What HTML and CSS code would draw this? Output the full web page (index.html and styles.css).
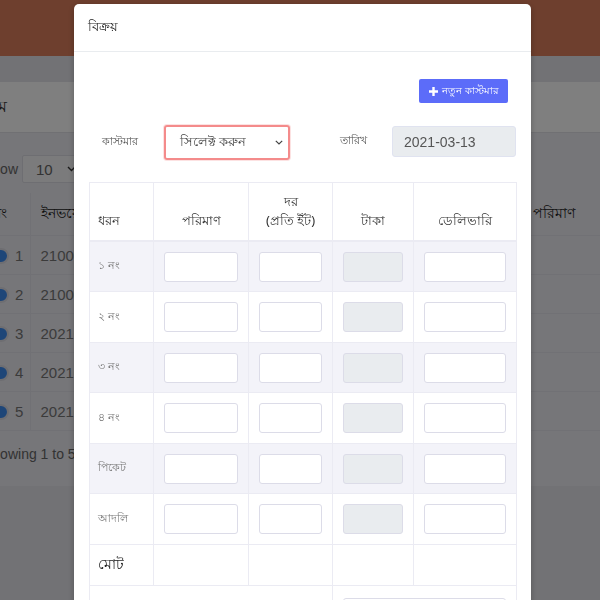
FILE: index.html
```html
<!DOCTYPE html>
<html lang="bn">
<head>
<meta charset="utf-8">
<title>বিক্রয়</title>
<link rel="stylesheet" href="styles.css">
</head>
<body>
<div class="page">
  <header class="topbar"></header>
  <main class="content">
    <section class="card">
      <div class="card-head"><span class="card-title">ম</span></div>
      <div class="card-body">
        <div class="dt-top">
          <span class="dt-label">Show</span>
          <span class="dt-select">10 <svg width="9" height="6" viewBox="0 0 9 6"><path d="M1 1l3.5 3.5L8 1" fill="none" stroke="#333" stroke-width="1.4"/></svg></span>
        </div>
        <table class="dt">
          <colgroup><col class="c1"><col class="c2"><col class="c3"><col class="c4"></colgroup>
          <thead>
            <tr><th>নং</th><th>ইনভয়েস নং</th><th></th><th>পরিমাণ</th></tr>
          </thead>
          <tbody>
            <tr><td><span class="radio"></span>1</td><td>21000</td><td></td><td></td></tr>
            <tr><td><span class="radio"></span>2</td><td>21000</td><td></td><td></td></tr>
            <tr><td><span class="radio"></span>3</td><td>20210</td><td></td><td></td></tr>
            <tr><td><span class="radio"></span>4</td><td>20210</td><td></td><td></td></tr>
            <tr><td><span class="radio"></span>5</td><td>20210</td><td></td><td></td></tr>
          </tbody>
        </table>
        <div class="dt-info">Showing 1 to 5 of 5 entries</div>
      </div>
    </section>
  </main>
</div>

<div class="backdrop"></div>

<div class="modal">
  <div class="modal-header"><h5 class="modal-title">বিক্রয়</h5></div>
  <div class="modal-body">
    <div class="btn-row">
      <button class="btn-primary"><svg class="plus" width="9" height="9" viewBox="0 0 9 9"><path d="M4.5 0v9M0 4.5h9" stroke="#fff" stroke-width="2.4"/></svg>নতুন কাস্টমার</button>
    </div>
    <div class="form-row">
      <label class="lbl lbl-customer">কাস্টমার</label>
      <div class="select">
        <span>সিলেক্ট করুন</span>
        <svg width="8" height="5" viewBox="0 0 8 5"><path d="M0.8 0.8L4 4l3.2-3.2" fill="none" stroke="#444" stroke-width="1.2"/></svg>
      </div>
      <label class="lbl lbl-date">তারিখ</label>
      <input class="date" type="text" value="2021-03-13" disabled>
    </div>
    <table class="sale">
      <colgroup><col class="s1"><col class="s2"><col class="s3"><col class="s4"><col class="s5"></colgroup>
      <thead>
        <tr><th class="left">ধরন</th><th>পরিমাণ</th><th>দর<br>(প্রতি ইঁট)</th><th>টাকা</th><th>ডেলিভারি</th></tr>
      </thead>
      <tbody>
        <tr class="odd"><td class="kind">১ নং</td><td><input></td><td><input></td><td><input disabled></td><td><input></td></tr>
        <tr><td class="kind">২ নং</td><td><input></td><td><input></td><td><input disabled></td><td><input></td></tr>
        <tr class="odd"><td class="kind">৩ নং</td><td><input></td><td><input></td><td><input disabled></td><td><input></td></tr>
        <tr><td class="kind">৪ নং</td><td><input></td><td><input></td><td><input disabled></td><td><input></td></tr>
        <tr class="odd"><td class="kind">পিকেট</td><td><input></td><td><input></td><td><input disabled></td><td><input></td></tr>
        <tr><td class="kind">আদলি</td><td><input></td><td><input></td><td><input disabled></td><td><input></td></tr>
        <tr class="total"><td>মোট</td><td></td><td></td><td></td><td></td></tr>
        <tr class="extra"><td colspan="3" class="right">পরিবহন খরচ</td><td colspan="2"><input></td></tr>
      </tbody>
    </table>
  </div>
</div>
</body>
</html>
```

FILE: styles.css
```css
html, body {
  margin: 0;
  padding: 0;
  overflow: hidden;
  height: 600px;
}
body {
  font-family: "Noto Sans", "Liberation Sans", sans-serif;
  color: #333;
  background: #e4e4ea;
}

/* background page */
.page { width: 600px; }
.topbar { height: 56px; background: #dc7e5c; }
.content { padding-top: 26px; }
.card {
  margin: 0 -40px;
  background: #ececf2;
  height: 404px;
}
.card-head {
  height: 51px;
  background: #fff;
  display: flex;
  align-items: center;
  border-bottom: 1px solid #e0e0e6;
  box-sizing: border-box;
  padding-left: 38px;
  font-size: 16px;
}
.card-body { padding: 22px 23px 0; }
.dt-top { display: flex; align-items: center; height: 28px; font-family: "Liberation Sans", sans-serif; font-size: 14px; color: #666; }
.dt-label { margin-right: 4px; }
.dt-select {
  display: inline-flex; align-items: center; gap: 14px;
  height: 28px; box-sizing: border-box; width: 56px; padding-left: 13px;
  border: 1px solid #dcdce4; background: #f6f6f8; font-size: 15px; border-radius: 2px;
}
.dt {
  margin-top: 10px;
  width: 634px;
  table-layout: fixed;
  border-collapse: collapse;
  font-family: "Liberation Sans", sans-serif;
  font-size: 14px;
}
.dt .c1 { width: 47px; }
.dt .c2 { width: 246px; }
.dt .c3 { width: 246px; }
.dt .c4 { width: 95px; }
.dt th {
  height: 42px; font-weight: normal; text-align: left; padding: 0 10px;
  color: #222; border-right: 1px solid #e2e2ea; border-bottom: 1px solid #e2e2ea; font-size: 14px;
  font-family: "Noto Sans", sans-serif;
}
.dt td { height: 38px; padding: 0 10px; color: #777; border-right: 1px solid #e2e2ea; border-bottom: 1px solid #e2e2ea; font-size: 15px; white-space: nowrap; }
.dt td:first-child { padding: 0 0 0 10px; }
.radio {
  display: inline-block; width: 12px; height: 12px; border-radius: 50%;
  background: #3d8cf0; border: 2px solid #dcdce4; vertical-align: -3px; margin-right: 6px;
  box-sizing: content-box;
}
.dt-info { font-family: "Liberation Sans", sans-serif; font-size: 14px; color: #666; margin-top: 15px; }

.backdrop {
  position: fixed; inset: 0; background: rgba(0, 0, 0, 0.5);
}

/* modal */
.modal {
  position: fixed;
  left: 74px;
  top: 4px;
  width: 457px;
  height: 640px;
  background: #fff;
  border-radius: 5px;
  box-shadow: 0 2px 6px rgba(0,0,0,0.25);
}
.modal-header {
  height: 48px;
  box-sizing: border-box;
  padding: 0 14px;
  display: flex;
  align-items: center;
  border-bottom: 1px solid #e9ecef;
}
.modal-title { margin: 0; font-size: 13px; font-weight: normal; color: #222; }
.modal-body { padding: 27px 15px 0; }
.btn-row { display: flex; justify-content: flex-end; padding-right: 8px; }
.btn-primary {
  display: inline-flex; align-items: center; gap: 4px;
  height: 24px; width: 89px; padding: 0 0 0 10px; box-sizing: border-box;
  background: #5c6cf9; color: #fff; border: 0; border-radius: 2px;
  font-family: inherit; font-size: 10px;
}
.form-row { display: flex; align-items: center; margin-top: 22px; height: 35px; }
.lbl { font-size: 11px; color: #555; }
.lbl-customer { width: 61px; text-align: center; }
.select {
  margin-left: 14px;
  width: 126px; height: 35px; box-sizing: border-box;
  border: 2px solid #f48b8b; border-radius: 3px;
  display: flex; align-items: center; justify-content: space-between;
  padding: 0 5px 0 14px; font-size: 13px; color: #444;
  box-shadow: 0 0 0 1px rgba(244, 139, 139, 0.25);
}
.lbl-date { margin-left: 50px; margin-top: -2px; }
.date {
  margin-left: auto; width: 124px; height: 31px; box-sizing: border-box;
  background: #e9ecef; border: 1px solid #e0e3f0; border-radius: 3px;
  padding: 0 11px; font-family: "Liberation Sans", sans-serif; font-size: 14px; color: #555;
  align-self: flex-start; margin-top: 1px;
}
.sale {
  margin-top: 22px;
  width: 427px;
  table-layout: fixed;
  border-collapse: collapse;
  border: 1px solid #ebebf3;
}
.sale .s1 { width: 64px; }
.sale .s2 { width: 95px; }
.sale .s3 { width: 84px; }
.sale .s4 { width: 81px; }
.sale .s5 { width: 103px; }
.sale th {
  height: 58px; box-sizing: border-box;
  vertical-align: bottom; padding: 0 8px 10px;
  font-weight: normal; font-size: 13px; color: #333; line-height: 19px;
  border: 1px solid #ebebf3; border-bottom: 2px solid #ebebf3;
}
.sale th.left { text-align: left; }
.sale td {
  padding: 10px 10px 9.5px;
  border: 1px solid #ebebf3;
}
.sale tr.odd td { background: #f3f3f9; }
.sale td.kind { font-size: 11px; color: #777; padding-left: 8px; }
.sale input {
  display: block; width: 100%; height: 30px; box-sizing: border-box;
  border: 1px solid #dcdce8; border-radius: 3px; background: #fff; margin: 0;
}
.sale input:disabled { background: #e9ecef; }
.sale tr.total td { height: 37px; box-sizing: border-box; padding: 8px 8px; font-size: 14px; color: #222; }
.sale td.right { text-align: right; font-size: 13px; color: #333; padding-top: 24px; vertical-align: top; }
```
